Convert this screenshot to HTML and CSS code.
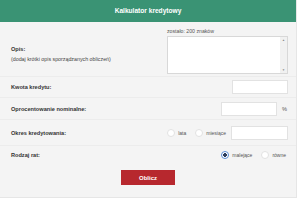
FILE: index.html
```html
<!DOCTYPE html>
<html lang="pl">
<head>
    <meta charset="UTF-8">
    <title>Kalkulator kredytowy</title>
    <link rel="stylesheet" href="styles.css">
</head>
<body>
    <div class="calc">
        <div class="calc-header">Kalkulator kredytowy</div>

        <!-- Opis -->
        <div class="row row-desc">
            <div class="label">
                <b>Opis:</b>
                <span class="hint">(dodaj krótki opis sporządzanych obliczeń)</span>
            </div>
            <div class="desc-box">
                <div class="counter">zostało: 200 znaków</div>
                <div class="textarea">
                    <div class="scrollbar">
                        <span class="arrow">&#9650;</span>
                        <span class="arrow">&#9660;</span>
                    </div>
                </div>
            </div>
        </div>

        <div class="row row-amount">
            <div class="label"><b>Kwota kredytu:</b></div>
            <div class="input"></div>
        </div>

        <div class="row row-rate">
            <div class="label"><b>Oprocentowanie nominalne:</b></div>
            <div class="controls">
                <div class="input"></div>
                <span class="unit">%</span>
            </div>
        </div>

        <div class="row row-period">
            <div class="label"><b>Okres kredytowania:</b></div>
            <div class="controls">
                <span class="radio"></span><span class="opt">lata</span>
                <span class="radio"></span><span class="opt">miesiące</span>
                <div class="input"></div>
            </div>
        </div>

        <div class="row row-type">
            <div class="label"><b>Rodzaj rat:</b></div>
            <div class="controls">
                <span class="radio checked"></span><span class="opt">malejące</span>
                <span class="radio"></span><span class="opt">równe</span>
            </div>
        </div>

        <div class="actions">
            <button class="btn">Oblicz</button>
        </div>
    </div>
</body>
</html>
```

FILE: styles.css
```css
/* Kalkulator */
body {
    margin: 0;
    background: #ffffff;
    font-family: "Liberation Sans", Arial, sans-serif;
    color: #333;
}

.calc {
    width: 297px;
    height: 198px;
    background: #f4f4f4;
    border-right: 1px solid #e6e6e6;
    border-bottom: 1px solid #e6e6e6;
    box-sizing: border-box;
}

.calc-header {
    height: 22px;
    line-height: 22px;
    background: #3a9374;
    color: #fff;
    font-weight: bold;
    font-size: 6.6px;
    text-align: center;
}

.row {
    display: flex;
    align-items: center;
    justify-content: space-between;
    padding: 0 8px 0 11px;
    border-bottom: 1px solid #ececec;
    font-size: 5.6px;
}

.label b {
    display: block;
    color: #333;
}

.hint {
    display: block;
    margin-top: 4px;
    font-size: 5.3px;
    color: #444;
}

.row-desc {
    height: 54px;
}

.row-desc .label {
    padding-top: 10px;
}

.desc-box {
    align-self: flex-start;
    padding-top: 6px;
    width: 121px;
}

.counter {
    font-size: 5.2px;
    color: #555;
    margin-bottom: 2px;
}

.textarea {
    height: 36px;
    background: #fff;
    border: 1px solid #d8d8d8;
    display: flex;
    justify-content: flex-end;
}

.scrollbar {
    width: 7px;
    background: #f1f1f1;
    display: flex;
    flex-direction: column;
    justify-content: space-between;
    align-items: center;
    font-size: 3px;
    color: #888;
    padding: 1px 0;
}

.input {
    width: 56px;
    height: 14px;
    background: #fff;
    border: 1px solid #e2e2e2;
    box-sizing: border-box;
}

.controls {
    display: flex;
    align-items: center;
}

.row-amount {
    height: 20px;
}

.row-rate {
    height: 21px;
}

.unit {
    margin-left: 5px;
    width: 6px;
    font-size: 5.6px;
    color: #555;
}

.row-period {
    height: 25px;
}

.row-period .opt:nth-of-type(4) {
    margin-right: 0;
}

.row-period .input {
    margin-left: 5px;
    width: 57px;
}

.row-type {
    height: 18px;
    border-bottom: none;
}

.radio {
    width: 6px;
    height: 6px;
    border-radius: 50%;
    background: #fff;
    border: 0.5px solid #e2e2e2;
}

.radio.checked {
    width: 6px;
    height: 6px;
    border: 1.2px solid #5b8fd6;
    background: radial-gradient(circle, #2d3e5c 0 45%, #fff 50%);
}

.opt {
    margin: 0 9px 0 3px;
    font-size: 5px;
    color: #555;
}

.row-type .opt:last-child {
    margin-right: 2px;
}

.actions {
    display: flex;
    justify-content: center;
    padding-top: 6px;
}

.btn {
    width: 54px;
    height: 15px;
    background: #b7282e;
    color: #fff;
    border: none;
    padding: 0;
    font-family: "Liberation Sans", Arial, sans-serif;
    font-weight: bold;
    font-size: 6px;
}
```
